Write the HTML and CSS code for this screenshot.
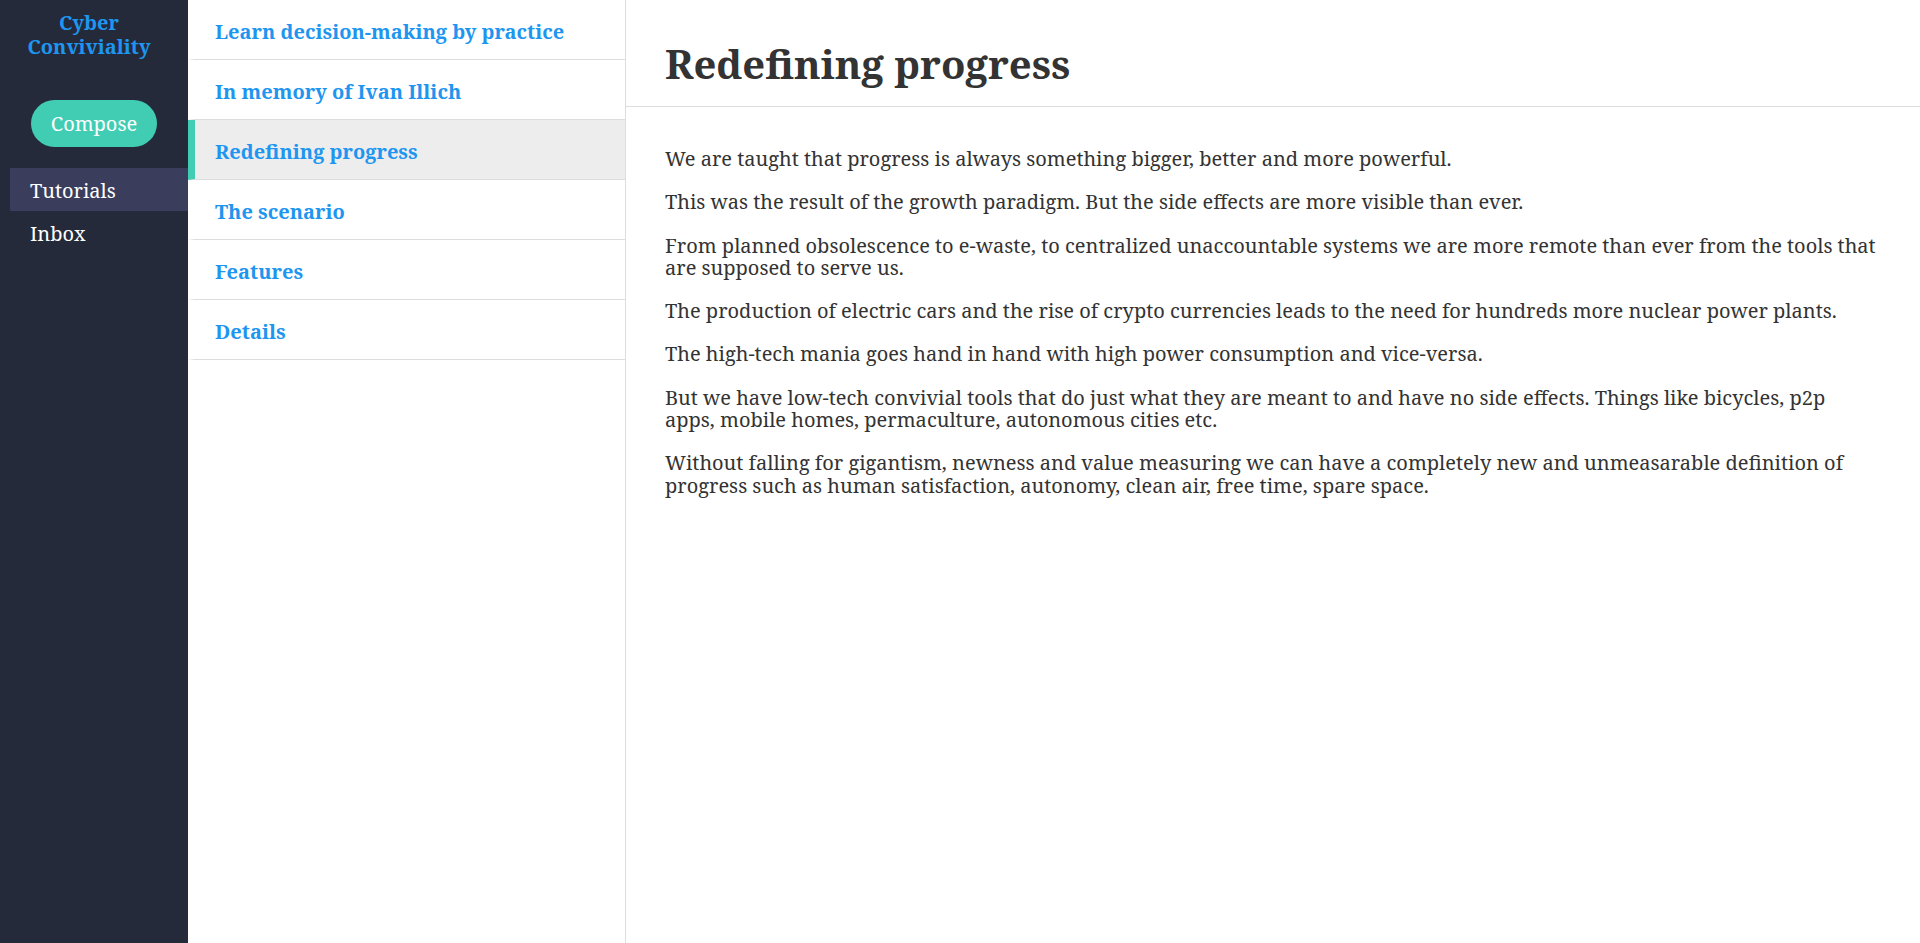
FILE: index.html
```html
<!DOCTYPE html>
<html lang="en">
<head>
<meta charset="utf-8">
<title>Cyber Conviviality</title>
<link rel="stylesheet" href="styles.css">
</head>
<body>
<div class="app">
  <aside class="sidebar">
    <div class="brand">Cyber<br>Conviviality</div>
    <div class="compose-wrap"><button class="compose">Compose</button></div>
    <nav class="nav">
      <a class="nav-item active">Tutorials</a>
      <a class="nav-item">Inbox</a>
    </nav>
  </aside>
  <section class="list">
    <a class="list-item">Learn decision-making by practice</a>
    <a class="list-item">In memory of Ivan Illich</a>
    <a class="list-item selected">Redefining progress</a>
    <a class="list-item">The scenario</a>
    <a class="list-item">Features</a>
    <a class="list-item">Details</a>
  </section>
  <main class="main">
    <header class="main-header"><h1>Redefining progress</h1></header>
    <article class="main-body">
      <p>We are taught that progress is always something bigger, better and more powerful.</p>
      <p>This was the result of the growth paradigm. But the side effects are more visible than ever.</p>
      <p>From planned obsolescence to e-waste, to centralized unaccountable systems we are more remote than ever from the tools that are supposed to serve us.</p>
      <p>The production of electric cars and the rise of crypto currencies leads to the need for hundreds more nuclear power plants.</p>
      <p>The high-tech mania goes hand in hand with high power consumption and vice-versa.</p>
      <p>But we have low-tech convivial tools that do just what they are meant to and have no side effects. Things like bicycles, p2p apps, mobile homes, permaculture, autonomous cities etc.</p>
      <p>Without falling for gigantism, newness and value measuring we can have a completely new and unmeasarable definition of progress such as human satisfaction, autonomy, clean air, free time, spare space.</p>
    </article>
  </main>
</div>
</body>
</html>
```
FILE: styles.css
```css
* { box-sizing: border-box; }
html, body { margin: 0; padding: 0; height: 100%; }
body {
  font-family: "Noto Serif", "DejaVu Serif", "Liberation Serif", serif;
  color: #333;
  background: #fff;
}
.app { display: flex; height: 100vh; }

.sidebar {
  width: 188px;
  flex: none;
  background: #252a3b;
  color: #fff;
}
.brand {
  padding: 11px 10px 0 0;
  height: 58px;
  text-align: center;
  font-weight: bold;
  font-size: 20px;
  line-height: 23.5px;
  color: #1e96f0;
}
.compose-wrap {
  display: flex;
  justify-content: center;
  margin-top: 42px;
}
.compose {
  width: 126px;
  height: 47px;
  border: none;
  border-radius: 24px;
  background: #41cdb3;
  color: #fff;
  font-family: inherit;
  font-size: 20px;
  padding: 0;
}
.nav { margin-top: 21px; padding-left: 10px; }
.nav-item {
  display: block;
  height: 43px;
  line-height: 45px;
  padding-left: 20px;
  font-size: 20px;
  color: #fff;
}
.nav-item.active { background: #3b3d5c; }

.list {
  width: 438px;
  flex: none;
  border-right: 1px solid #ddd;
  background: #fff;
}
.list-item {
  display: block;
  height: 60px;
  padding-top: 3px;
  line-height: 57px;
  overflow: hidden;
  border-bottom: 1px solid #ddd;
  border-left: 7px solid transparent;
  padding-left: 20px;
  font-weight: bold;
  font-size: 20px;
  color: #1e96f0;
}
.list-item.selected {
  background: #ededed;
  border-left-color: #41cdb3;
}

.main { flex: 1; min-width: 0; }
.main-header {
  padding: 38px 43px 16px 39px;
  border-bottom: 1px solid #ddd;
}
.main-header h1 {
  margin: 0;
  font-size: 40px;
  line-height: 52px;
  font-weight: bold;
  color: #333;
}
.main-body {
  padding: 20px 43px 0 39px;
}
.main-body p {
  margin: 21px 0;
  font-size: 20px;
  line-height: 22.3px;
  color: #333;
}
```
